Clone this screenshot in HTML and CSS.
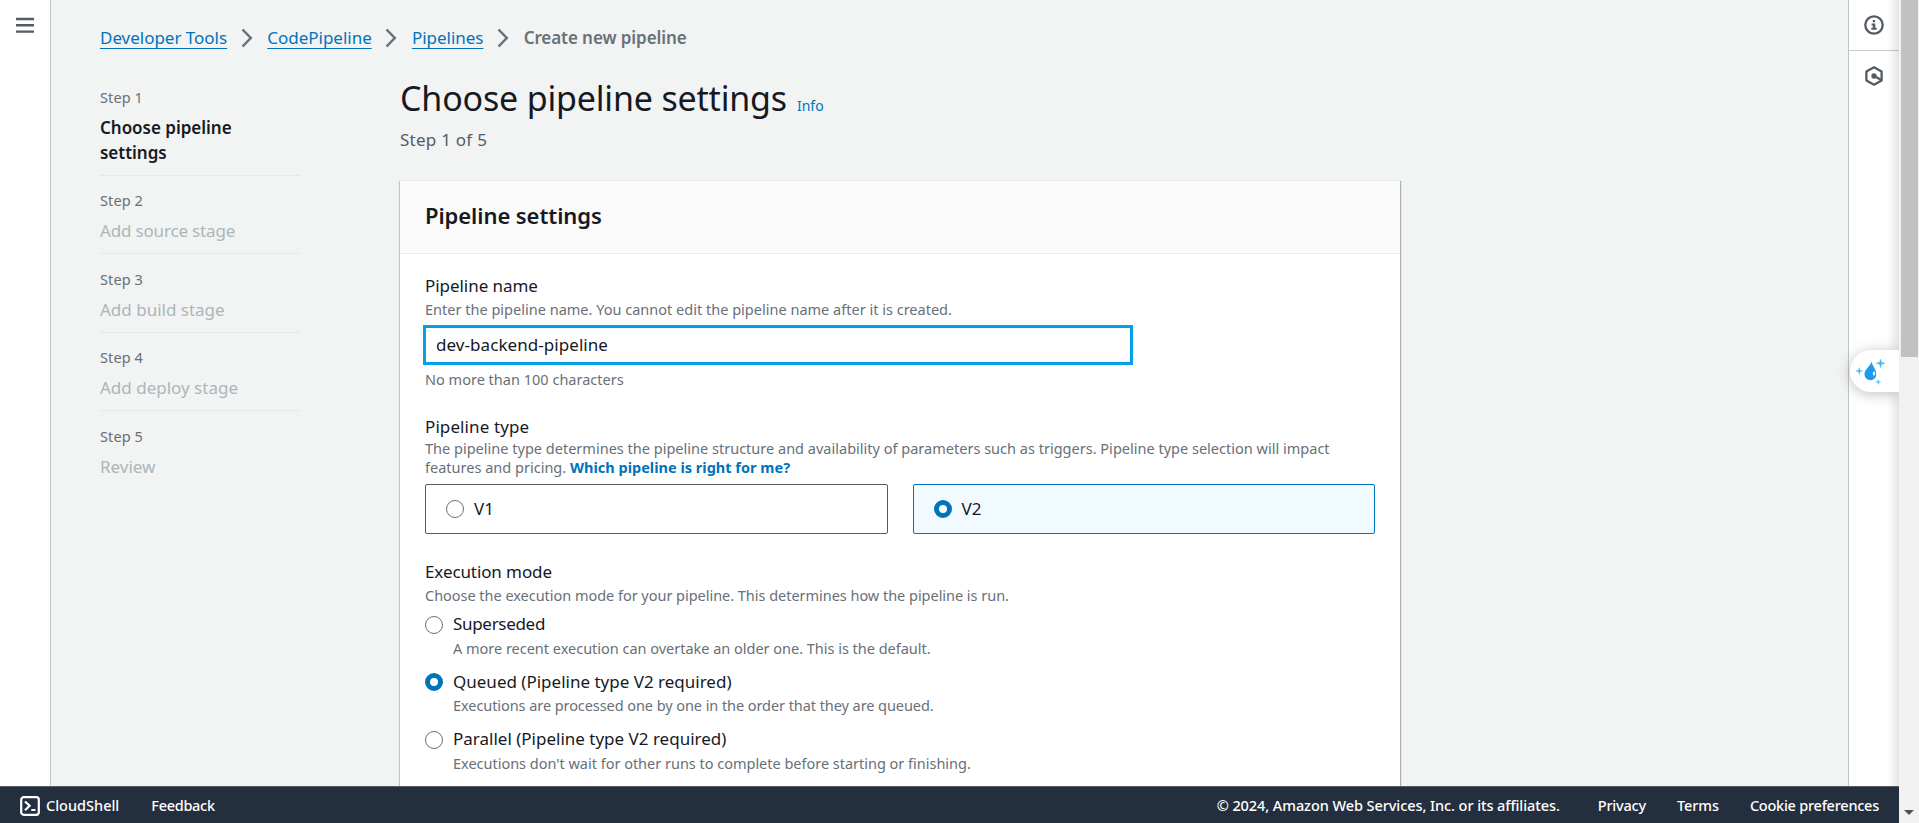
FILE: index.html
```html
<!DOCTYPE html>
<html lang="en">
<head>
<meta charset="utf-8">
<title>Create new pipeline</title>
<link rel="stylesheet" href="styles.css">
</head>
<body>
<div class="window">
  <div class="app">
    <div class="workspace">
      <nav class="rail rail-left">
        <svg class="icon" width="18" height="18" viewBox="0 0 18 18"><path d="M0 2h18M0 8.2h18M0 14.6h18" stroke="#545b64" stroke-width="2.4"/></svg>
      </nav>
      <main class="main">
        <div class="breadcrumb">
          <a class="crumb">Developer Tools</a>
          <svg width="12" height="20" viewBox="0 0 12 20"><path d="M1.5 1.5 9.8 10l-8.300 8.500" fill="none" stroke="#687078" stroke-width="2.5"/></svg>
          <a class="crumb">CodePipeline</a>
          <svg width="12" height="20" viewBox="0 0 12 20"><path d="M1.5 1.5 9.8 10l-8.300 8.500" fill="none" stroke="#687078" stroke-width="2.5"/></svg>
          <a class="crumb">Pipelines</a>
          <svg width="12" height="20" viewBox="0 0 12 20"><path d="M1.5 1.5 9.8 10l-8.300 8.500" fill="none" stroke="#687078" stroke-width="2.5"/></svg>
          <span class="crumb-current">Create new pipeline</span>
        </div>
        <div class="columns">
          <ol class="steps">
            <li class="step step-active"><div class="step-label">Step 1</div><div class="step-name">Choose pipeline settings</div></li>
            <li class="step"><div class="step-label">Step 2</div><div class="step-name tight">Add source stage</div></li>
            <li class="step"><div class="step-label">Step 3</div><div class="step-name">Add build stage</div></li>
            <li class="step"><div class="step-label">Step 4</div><div class="step-name">Add deploy stage</div></li>
            <li class="step"><div class="step-label">Step 5</div><div class="step-name">Review</div></li>
          </ol>
          <div class="content">
            <div class="title-row"><h1 class="title">Choose pipeline settings</h1><a class="info">Info</a></div>
            <div class="subtitle">Step 1 of 5</div>
            <section class="card">
              <header class="card-header"><h2 class="card-title">Pipeline settings</h2></header>
              <div class="card-body">
                <div class="field">
                  <div class="label">Pipeline name</div>
                  <div class="hint">Enter the pipeline name. You cannot edit the pipeline name after it is created.</div>
                  <div class="input">dev-backend-pipeline</div>
                  <div class="hint constraint">No more than 100 characters</div>
                </div>
                <div class="field type-field">
                  <div class="label type-label">Pipeline type</div>
                  <div class="hint type-hint">The pipeline type determines the pipeline structure and availability of parameters such as triggers. Pipeline type selection will impact<br>features and pricing. <a class="help-link">Which pipeline is right for me?</a></div>
                  <div class="tiles">
                    <div class="tile"><span class="radio"></span><span class="tile-name">V1</span></div>
                    <div class="tile tile-selected"><span class="radio radio-on"></span><span class="tile-name">V2</span></div>
                  </div>
                </div>
                <div class="field mode-field">
                  <div class="label mode-label">Execution mode</div>
                  <div class="hint mode-hint">Choose the execution mode for your pipeline. This determines how the pipeline is run.</div>
                  <div class="options">
                    <div class="option"><span class="radio"></span><div><div class="option-name name-tight">Superseded</div><div class="hint option-hint">A more recent execution can overtake an older one. This is the default.</div></div></div>
                    <div class="option"><span class="radio radio-on"></span><div><div class="option-name">Queued (Pipeline type V2 required)</div><div class="hint option-hint hint-tight">Executions are processed one by one in the order that they are queued.</div></div></div>
                    <div class="option"><span class="radio"></span><div><div class="option-name">Parallel (Pipeline type V2 required)</div><div class="hint option-hint">Executions don't wait for other runs to complete before starting or finishing.</div></div></div>
                  </div>
                </div>
              </div>
            </section>
          </div>
        </div>
      </main>
      <aside class="rail rail-right">
        <div class="rail-cell rail-cell-line">
          <svg class="icon" width="20" height="20" viewBox="0 0 20 20"><circle cx="10" cy="10" r="8.700" fill="none" stroke="#545b64" stroke-width="2.300"/><path d="M8.800 5h2.400v2.200H8.800zM7.600 8.400h3.700v4.400h1.400v2H7.300v-2h1.500v-2.400H7.600z" fill="#545b64"/></svg>
        </div>
        <div class="rail-cell rail-cell-hex">
          <svg class="icon" width="20" height="20" viewBox="0 0 20 20"><path d="M10 1.300 17.600 5.600v8.800L10 18.700 2.400 14.400V5.600z" fill="none" stroke="#545b64" stroke-width="2.300" stroke-linejoin="round"/><circle cx="10" cy="10" r="2.700" fill="#545b64"/><path d="m10 10 7.500 4" stroke="#545b64" stroke-width="2.300"/></svg>
        </div>
      </aside>
      <div class="assist">
        <svg width="32" height="30" viewBox="0 0 32 30"><path d="M16.500 3.500C17.500 8 21.300 11.500 21.300 16.200a5.900 6 0 0 1-11.800 0C9.500 11 15.500 8.500 16.500 3.500z" fill="#1d9bf0"/><path d="M19 13.300c1.800 1.500 1.500 3.900-.2 4.400-1.500-.8-1.300-3.200.2-4.400z" fill="#fff"/><path d="m25.500 1 1 3.300 3.700 1-3.700 1-1 3.600-1-3.600-3.600-1 3.600-1zM4.200 9.500l.8 2.700 2.700.8-2.700.8-.8 2.700-.8-2.700L.7 13l2.700-.8zM23.300 21.500l.6 1.900 1.900.6-1.900.6-.6 1.900-.6-1.900-1.900-.6 1.900-.6z" fill="#42b8f5" stroke="#42b8f5" stroke-width=".3"/></svg>
      </div>
    </div>
    <footer class="footer">
      <span class="shell"><svg width="20" height="20" viewBox="0 0 20 20"><rect x="1.200" y="1.200" width="17.600" height="17.600" rx="2.500" fill="none" stroke="#fff" stroke-width="2.200"/><path d="m5 5.500 4.600 4.300L5 14.200M11.300 14h4.200" fill="none" stroke="#fff" stroke-width="2.200"/></svg>CloudShell</span>
      <span class="feedback">Feedback</span>
      <span class="copyright">© 2024, Amazon Web Services, Inc. or its affiliates.</span>
      <span class="privacy">Privacy</span>
      <span class="terms">Terms</span>
      <span class="cookies">Cookie preferences</span>
    </footer>
  </div>
  <div class="scrollbar"><div class="thumb"></div><div class="arrow"></div></div>
</div>
</body>
</html>
```
FILE: styles.css
```css
* { box-sizing: border-box; }
body {
  margin: 0;
  font: 400 17px/25px "Noto Sans", sans-serif;
  color: #16191f;
  background: #f2f3f3;
  overflow: hidden;
}
h1, h2, ol { margin: 0; padding: 0; list-style: none; }
svg { display: block; flex: none; }
.window { display: flex; width: 100vw; height: 100vh; overflow: hidden; }
.app { flex: 1; min-width: 0; display: flex; flex-direction: column; }
.workspace { flex: 1; min-height: 0; display: flex; position: relative; overflow: hidden; }

.rail { flex: none; background: #fff; position: relative; z-index: 1; }
.rail-left { width: 51px; padding: 17px 0 0 16px; border-right: 1px solid #bfc6c7; }
.rail-right { width: 51px; border-left: 1px solid #bfc6c7; }
.rail-right::after {
  content: "";
  position: absolute;
  inset: 0 0 0 auto;
  width: 12px;
  background: linear-gradient(to right, rgba(0,0,0,0), rgba(0,0,0,.1));
}
.rail-cell { height: 51px; display: flex; align-items: center; justify-content: center; }
.rail-cell-line { border-bottom: 1px solid #c4cfcf; }
.rail-cell-hex { height: 50px; }

.main { flex: 1; min-width: 0; padding: 25px 0 0 49px; }
.breadcrumb { display: flex; align-items: center; height: 25px; white-space: nowrap; }
.breadcrumb svg { margin: 0 14.5px 0 13.7px; }
.crumb {
  color: #0073bb;
  letter-spacing: -.02px;
  text-decoration: underline;
  text-decoration-thickness: 1px;
  text-underline-offset: 4px;
  text-decoration-skip-ink: none;
}
.crumb-current { font-weight: 600; color: #687078; letter-spacing: -.08px; }

.columns { display: flex; gap: 100px; }
.steps { width: 200px; flex: none; padding-top: 37px; }
.step { padding-bottom: 10px; border-bottom: 1px solid #e6e9e9; margin-bottom: 14.6px; }
.step:first-child { margin-bottom: 14px; }
.step:last-child { border: 0; }
.step-label { font-size: 14.5px; line-height: 20px; letter-spacing: .1px; color: #687078; margin-bottom: 8px; }
.step-name { color: #aab7b8; }
.tight { letter-spacing: -.17px; }
.step-active .step-name { font-weight: 600; color: #16191f; letter-spacing: -.02px; }

.content { width: 1000px; padding-top: 26px; }
.title-row { display: flex; align-items: baseline; gap: 10px; height: 45px; }
.title { font-size: 34px; line-height: 45px; font-weight: 400; letter-spacing: -.18px; }
.info { font-size: 14px; color: #0073bb; }
.subtitle { margin-top: 6px; color: #545b64; letter-spacing: .25px; }
.card {
  margin: 28px 0 0;
  height: 700px;
  background: #fff;
  border-top: 1px solid #eaeded;
  box-shadow: 1px 1px 1px 0 rgba(0,28,36,.3), -1px 1px 1px 0 rgba(0,28,36,.2);
}
.card-header { height: 73px; padding: 19px 25px 0; background: #fafafa; border-bottom: 1px solid #eaeded; }
.card-title { font-size: 22px; line-height: 30px; font-weight: 600; letter-spacing: -.07px; }
.card-body { padding: 19px 25px 0; white-space: nowrap; }
.label { letter-spacing: -.05px; }
.hint { font-size: 14.5px; line-height: 20px; color: #687078; padding-top: 1px; letter-spacing: .01px; }
.input {
  width: 710px;
  height: 40px;
  margin: 6px 0 0 -2px;
  padding: 4px 0 0 10px;
  border: 3px solid #00a1e9;
  letter-spacing: .06px;
}
.constraint { padding-top: 4px; }
.type-field { margin-top: 25px; }
.type-label { letter-spacing: .1px; }
.type-hint { line-height: 19px; padding-top: 0; }
.help-link { color: #0073bb; font-weight: 700; }
.tiles { display: flex; gap: 25px; margin-top: 7px; }
.tile {
  flex: 1;
  display: flex;
  align-items: center;
  gap: 10px;
  height: 50px;
  padding: 0 0 0 20px;
  border: 1px solid #545b64;
  border-radius: 2px;
}
.tile-name { padding-bottom: 2px; }
.tile-selected { border-color: #0073bb; background: #f1faff; }
.radio { flex: none; width: 18px; height: 18px; border: 1.5px solid #687078; border-radius: 50%; background: #fff; }
.radio-on { border: 5.5px solid #0073bb; }
.mode-field { margin-top: 25px; }
.mode-label { letter-spacing: -.1px; }
.mode-hint { letter-spacing: -.03px; }
.options { margin-top: 6px; }
.option { display: flex; gap: 10px; height: 57.5px; }
.option .radio { margin-top: 4.500px; }
.option-hint { padding-top: 2px; letter-spacing: -.015px; }
.hint-tight { letter-spacing: -.07px; padding-top: 1.500px; }
.name-tight { letter-spacing: -.31px; }

.footer {
  flex: none;
  display: flex;
  align-items: center;
  height: 37px;
  padding: 1px 20px 0;
  background: #232f3e;
  border-top: 1px solid #545b64;
  color: #fff;
  font-size: 14.5px;
  font-weight: 500;
  white-space: nowrap;
}
.shell { display: flex; align-items: center; gap: 6px; margin-right: 32px; }
.feedback { letter-spacing: -.3px; }
.copyright { margin-left: auto; letter-spacing: -.08px; }
.privacy { margin-left: 38px; letter-spacing: -.2px; }
.terms { margin-left: 31px; letter-spacing: -.1px; }
.cookies { margin-left: 31px; letter-spacing: -.24px; }

.assist {
  position: absolute;
  right: 0;
  top: 350px;
  z-index: 2;
  width: 49px;
  height: 42px;
  padding: 8px 0 0 5px;
  border-radius: 21px 0 0 21px;
  background: #fff;
  box-shadow: 0 2px 14px rgba(0,0,0,.25);
}
.scrollbar { flex: none; width: 20px; background: #f1f1f1; display: flex; flex-direction: column; justify-content: space-between; align-items: center; }
.thumb { width: 17px; height: 357px; background: #c1c1c1; }
.arrow { margin-bottom: 8px; border: 5px solid transparent; border-top-color: #505050; border-bottom: 0; }
```
